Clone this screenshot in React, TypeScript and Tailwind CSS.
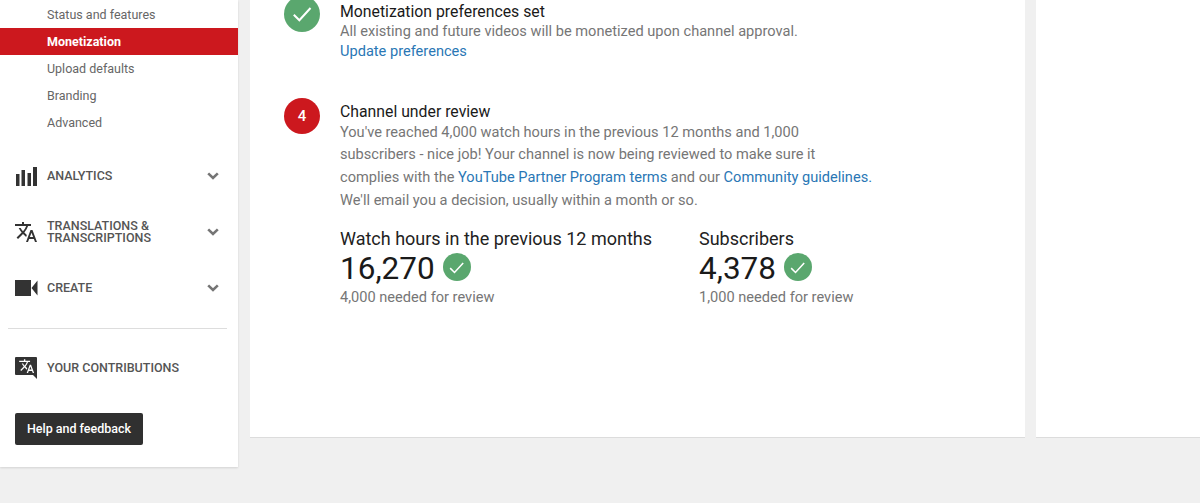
import React from 'react';
import { MdTranslate } from 'react-icons/md';

const Chevron = () => (
  <svg width="12" height="8" viewBox="0 0 12 8" className="text-[#757575]">
    <path d="M1.2 1.4 6 6 10.8 1.4" fill="none" stroke="currentColor" strokeWidth="2.6" />
  </svg>
);

const Check = ({ size }: { size: number }) => (
  <span className="flex shrink-0 items-center justify-center rounded-full bg-[#5aa76e]" style={{ width: size, height: size }}>
    <svg width={size * 0.62} height={size * 0.62} viewBox="0 0 20 20">
      <path d="M2.5 10.5 7.5 15.5 17.5 4.5" fill="none" stroke="#fff" strokeWidth="1.8" />
    </svg>
  </span>
);

const SubItem = ({ label, active }: { label: string; active?: boolean }) => (
  <div className={`flex h-[27px] items-center pl-[47px] pt-[2px] text-[12.5px] ${active ? 'bg-[#cc181e] font-bold text-white' : 'text-[#666]'}`}>
    {label}
  </div>
);

const Stat = ({ title, value, note, width }: { title: string; value: string; note: string; width: string }) => (
  <div className={width}>
    <div className="text-[18px] leading-[24px] text-[#222]">{title}</div>
    <div className="-mt-[0.5px] flex items-center gap-[8px]">
      <span className="text-[31.5px] leading-[36px] text-[#1a1a1a]">{value}</span>
      <span className="-mt-[3px]"><Check size={28} /></span>
    </div>
    <div className="text-[14.6px] leading-[20px] text-[#767676]">{note}</div>
  </div>
);

export default function App() {
  return (
    <div className="flex h-[503px] w-[1200px] overflow-hidden bg-[#f0f0f0] font-['Roboto',sans-serif]">
      <aside className="h-[467px] w-[238px] shrink-0 bg-white pt-px shadow-[0_1px_2px_rgba(0,0,0,0.12)]">
        <SubItem label="Status and features" />
        <SubItem label="Monetization" active />
        <SubItem label="Upload defaults" />
        <SubItem label="Branding" />
        <SubItem label="Advanced" />

        <div className="mt-[26px] flex h-[28px] items-center pl-[16px] pr-[19px] text-[12.5px] font-medium text-[#555]">
          <svg width="21" height="19" viewBox="0 0 21 19" className="mr-[10px] shrink-0 text-[#333]">
            <path fill="currentColor" d="M0 7h3.500v12H0zM5.500 3h3.500v16H5.500zM11.500 6h3.500v13H11.500zM17 0h4v19h-4z" />
          </svg>
          <span className="flex-1">ANALYTICS</span>
          <Chevron />
        </div>

        <div className="mt-[28px] flex h-[28px] items-center pl-[14px] pr-[19px] text-[12.5px] font-medium leading-[12px] text-[#555]">
          <MdTranslate className="mr-[9px] shrink-0 text-[#333]" size={24} />
          <span className="flex-1">TRANSLATIONS &amp;<br />TRANSCRIPTIONS</span>
          <Chevron />
        </div>

        <div className="mt-[28px] flex h-[28px] items-center pl-[15px] pr-[19px] text-[12.5px] font-medium text-[#555]">
          <svg width="23" height="16" viewBox="0 0 23 16" className="mr-[9px] shrink-0 text-[#333]">
            <path fill="currentColor" d="M0 0h16v16H0zM16.500 8 22.500 .500v15z" />
          </svg>
          <span className="flex-1">CREATE</span>
          <Chevron />
        </div>

        <div className="ml-[8px] mr-[11px] mt-[26px] border-t border-[#ddd]" />

        <div className="mt-[25px] flex h-[28px] items-center pl-[15px] text-[12.5px] font-medium text-[#555]">
          <svg width="23" height="23" viewBox="0 0 23 23" className="mr-[9px] shrink-0">
            <path fill="#333" d="M1 0h20a1 1 0 0 1 1 1v21l-4-4H1a1 1 0 0 1-1-1V1a1 1 0 0 1 1-1z" />
            <g transform="translate(3.500 1) scale(.68)" fill="#fff">
              <path d="m12.870 15.070-2.540-2.510.03-.03c1.740-1.940 2.980-4.170 3.710-6.530H17V4h-7V2H8v2H1v1.990h11.170C11.500 7.920 10.400 9.750 9 11.300 8.100 10.300 7.350 9.210 6.750 8.050h-2c.73 1.630 1.730 3.170 2.980 4.560l-5.090 5.020L4 19l5-5 3.110 3.110.76-2.040zM18.500 10h-2L12 22h2l1.120-3h4.750L21 22h2l-4.500-12zm-2.620 7 1.620-4.330L19.120 17h-3.240z" />
            </g>
          </svg>
          YOUR CONTRIBUTIONS
        </div>

        <button className="ml-[15px] mt-[31px] flex h-[32px] w-[128px] items-center justify-center rounded-[2px] bg-[#303030] text-[12.5px] font-medium text-white">
          Help and feedback
        </button>
      </aside>

      <main className="ml-[12px] h-[438px] w-[775px] shrink-0 border-b border-[#dcdcdc] bg-white pl-[34px]">
        <section className="-mt-[4px] flex gap-[20px]">
          <Check size={36} />
          <div className="mt-[6px]">
            <h2 className="text-[15.8px] leading-[19px] text-[#1a1a1a]">Monetization preferences set</h2>
            <p className="text-[14.6px] leading-[20px] text-[#767676]">All existing and future videos will be monetized upon channel approval.</p>
            <a className="block text-[14.6px] leading-[20px] text-[#2a77b5]">Update preferences</a>
          </div>
        </section>

        <section className="mt-[37px] flex gap-[20px]">
          <span className="flex h-[36px] w-[36px] shrink-0 items-center justify-center rounded-full bg-[#cc181e] text-[15px] font-medium text-white">4</span>
          <div className="mt-[5px]">
            <h2 className="text-[15.8px] leading-[17.5px] text-[#1a1a1a]">Channel under review</h2>
            <p className="w-[560px] text-[14.6px] leading-[22.7px] text-[#767676]">
              You've reached 4,000 watch hours in the previous 12 months and 1,000<br />
              subscribers - nice job! Your channel is now being reviewed to make sure it<br />
              complies with the <a className="text-[#2a77b5]">YouTube Partner Program terms</a> and our <a className="text-[#2a77b5]">Community guidelines.</a><br />
              We'll email you a decision, usually within a month or so.
            </p>
            <div className="mt-[16px] flex">
              <Stat width="w-[359px]" title="Watch hours in the previous 12 months" value="16,270" note="4,000 needed for review" />
              <Stat width="w-[200px]" title="Subscribers" value="4,378" note="1,000 needed for review" />
            </div>
          </div>
        </section>
      </main>

      <div className="ml-[11px] h-[438px] flex-1 border-b border-[#dcdcdc] bg-white" />
    </div>
  );
}
